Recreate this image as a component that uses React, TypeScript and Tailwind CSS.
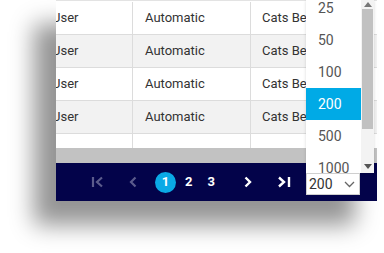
import React from "react";

const rows = [0, 1, 2, 3, 4];
const sizes = ["25", "50", "100", "200", "500", "1000"];

const App: React.FC = () => {
  return (
    <div
      className="w-[384px] h-[253px] bg-white overflow-hidden relative"
      style={{ fontFamily: "Roboto, 'Liberation Sans', sans-serif" }}
    >
      {/* Grid panel */}
      <div className="ml-[56px] w-[321px] h-[201px] flex flex-col bg-white shadow-[-22px_24px_22px_rgba(0,0,0,0.42)]">
        {/* Rows */}
        <div className="h-[148px] overflow-hidden pt-[1px] border-t border-[#e3e3e3]">
          {rows.map((r) => (
            <div
              key={r}
              className={`flex h-[33px] border-b border-[#dcdcdc] text-[13px] text-[#333] ${
                r % 2 === 1 ? "bg-[#f2f2f2]" : "bg-white"
              }`}
            >
              <div className="w-[77px] shrink-0 flex items-center border-r border-[#dcdcdc] overflow-hidden">
                <span className="-ml-[4px]">{r < 4 ? "User" : ""}</span>
              </div>
              <div className="w-[118px] shrink-0 flex items-center pl-[12px] border-r border-[#dcdcdc]">
                {r < 4 ? "Automatic" : ""}
              </div>
              <div className="w-[126px] shrink-0 flex items-center pl-[11px] whitespace-nowrap">
                {r < 4 ? "Cats Behaviour" : ""}
              </div>
            </div>
          ))}
        </div>
        {/* Horizontal scrollbar */}
        <div className="h-[15px] bg-[#c2c2c2]" />
        {/* Pager */}
        <div className="flex-1 bg-[#03034a] flex items-center text-white text-[13px] font-bold">
          <div className="ml-[35px] w-[14px] flex items-center text-[#5b5b8c]">
            <svg width="14" height="14" viewBox="0 0 14 14" fill="none" stroke="currentColor" strokeWidth="2.2">
              <path d="M2 2v10M11 2.5L6 7l5 4.5" />
            </svg>
          </div>
          <div className="ml-[23px] w-[10px] flex items-center text-[#5b5b8c]">
            <svg width="10" height="14" viewBox="0 0 10 14" fill="none" stroke="currentColor" strokeWidth="2.2">
              <path d="M7.5 2.5L3 7l4.5 4.5" />
            </svg>
          </div>
          <div className="ml-[17px] w-[21px] h-[21px] rounded-full bg-[#0aa9e6] flex items-center justify-center">
            1
          </div>
          <div className="ml-[9px]">2</div>
          <div className="ml-[15px]">3</div>
          <div className="ml-[28px] w-[10px] flex items-center">
            <svg width="10" height="14" viewBox="0 0 10 14" fill="none" stroke="white" strokeWidth="2.4">
              <path d="M2.5 2.5L7 7l-4.5 4.5" />
            </svg>
          </div>
          <div className="ml-[24px] w-[14px] flex items-center">
            <svg width="14" height="14" viewBox="0 0 14 14" fill="none" stroke="white" strokeWidth="2.4">
              <path d="M2 2.5L7 7l-5 4.5M12 2v10" />
            </svg>
          </div>
        </div>
      </div>

      {/* Page size dropdown (open) */}
      <div className="absolute left-[306px] top-0 w-[68px] h-[173px] flex bg-white shadow-[0_1px_3px_rgba(0,0,0,0.15)]">
        <div className="w-[55px] overflow-hidden">
          <div className="-mt-[8px]">
            {sizes.map((s) => (
              <div
                key={s}
                className={`h-[32px] flex items-center pl-[12px] text-[14px] ${
                  s === "200" ? "bg-[#00aae6] text-white" : "text-[#555]"
                }`}
              >
                {s}
              </div>
            ))}
          </div>
        </div>
        <div className="w-[13px] bg-[#f3f3f3] flex flex-col items-center">
          <div className="h-[9px] flex items-center text-[#777]">
            <svg width="8" height="5" viewBox="0 0 8 5">
              <path d="M0 5L4 0l4 5z" fill="currentColor" />
            </svg>
          </div>
          <div className="w-[11px] h-[120px] bg-[#c1c1c1]" />
          <div className="flex-1" />
          <div className="h-[14px] flex items-center text-[#555]">
            <svg width="8" height="5" viewBox="0 0 8 5">
              <path d="M0 0h8L4 5z" fill="currentColor" />
            </svg>
          </div>
        </div>
      </div>
      <div className="absolute left-[306px] top-[173px] w-[54px] h-[22px] bg-white border border-[#cfcfcf] flex items-center justify-between pl-[2px] pr-[4px] text-[14px] text-[#333]">
        <span>200</span>
        <svg width="11" height="7" viewBox="0 0 11 7" fill="none" stroke="#666" strokeWidth="1.3">
          <path d="M1 1l4.5 4.5L10 1" />
        </svg>
      </div>
    </div>
  );
};

export default App;
